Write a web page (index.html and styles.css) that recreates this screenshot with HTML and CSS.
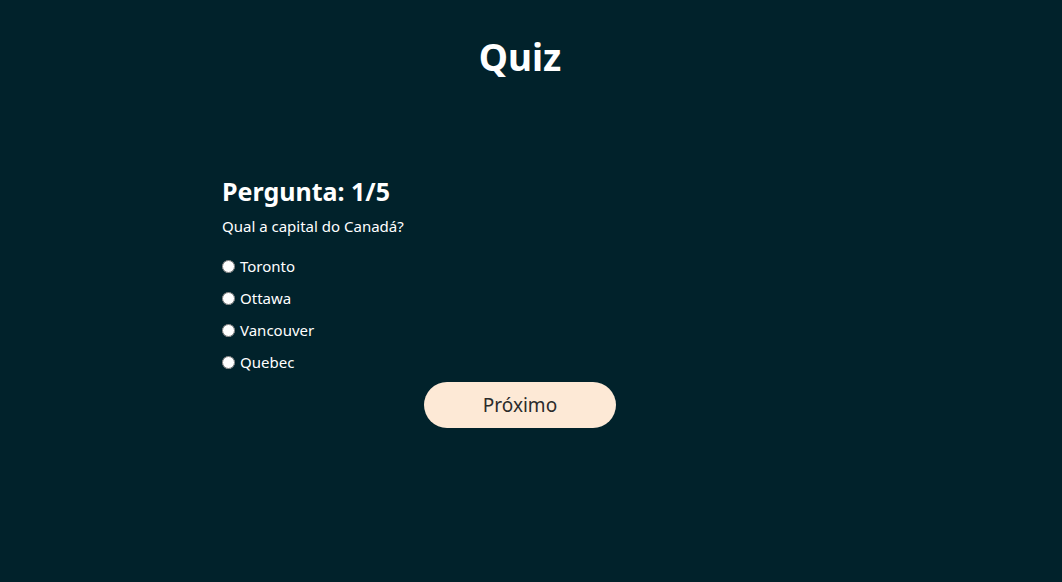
FILE: index.html
```html
<!DOCTYPE html>
<html lang="pt">
<head>
<meta charset="utf-8">
<title>Quiz</title>
<link rel="stylesheet" href="styles.css">
</head>
<body>
<div class="app">
  <h1 class="title">Quiz</h1>
  <div class="quiz">
    <h2 class="counter">Pergunta: 1/5</h2>
    <p class="question">Qual a capital do Canadá?</p>
    <ul class="options">
      <li><label class="option"><input type="radio" name="q"><span>Toronto</span></label></li>
      <li><label class="option"><input type="radio" name="q"><span>Ottawa</span></label></li>
      <li><label class="option"><input type="radio" name="q"><span>Vancouver</span></label></li>
      <li><label class="option"><input type="radio" name="q"><span>Quebec</span></label></li>
    </ul>
    <div class="actions"><button class="next">Próximo</button></div>
  </div>
</div>
</body>
</html>
```
FILE: styles.css
```css
html, body {
  margin: 0;
  padding: 0;
  background: #01222b;
  height: 100%;
}
body {
  padding-right: 22px;
  font-family: "Noto Sans", "Open Sans", sans-serif;
  color: #ffffff;
}
.app {
  width: 596px;
  margin: 0 auto;
}
.title {
  margin: 0;
  padding-top: 32px;
  text-align: center;
  font-size: 37px;
  font-weight: 700;
  line-height: 50px;
}
.quiz {
  margin-top: 92px;
}
.counter {
  margin: 0;
  font-size: 25px;
  line-height: 34px;
  font-weight: 700;
}
.question {
  margin: 7px 0 13px;
  font-size: 15px;
  line-height: 22px;
}
.options {
  list-style: none;
  margin: 0;
  padding: 0;
}
.options li {
  height: 32px;
  display: flex;
  align-items: center;
}
.option {
  display: flex;
  align-items: center;
  font-size: 15px;
}
.option input {
  margin: 0 5px 0 0;
  width: 13px;
  height: 13px;
}
.actions {
  display: flex;
  justify-content: center;
  margin-top: 4px;
}
.next {
  width: 192px;
  height: 46px;
  border: none;
  border-radius: 23px;
  background: #fde9d6;
  color: #2b2b2b;
  font-family: "Noto Sans", "Open Sans", sans-serif;
  font-size: 19px;
  cursor: pointer;
}
```
